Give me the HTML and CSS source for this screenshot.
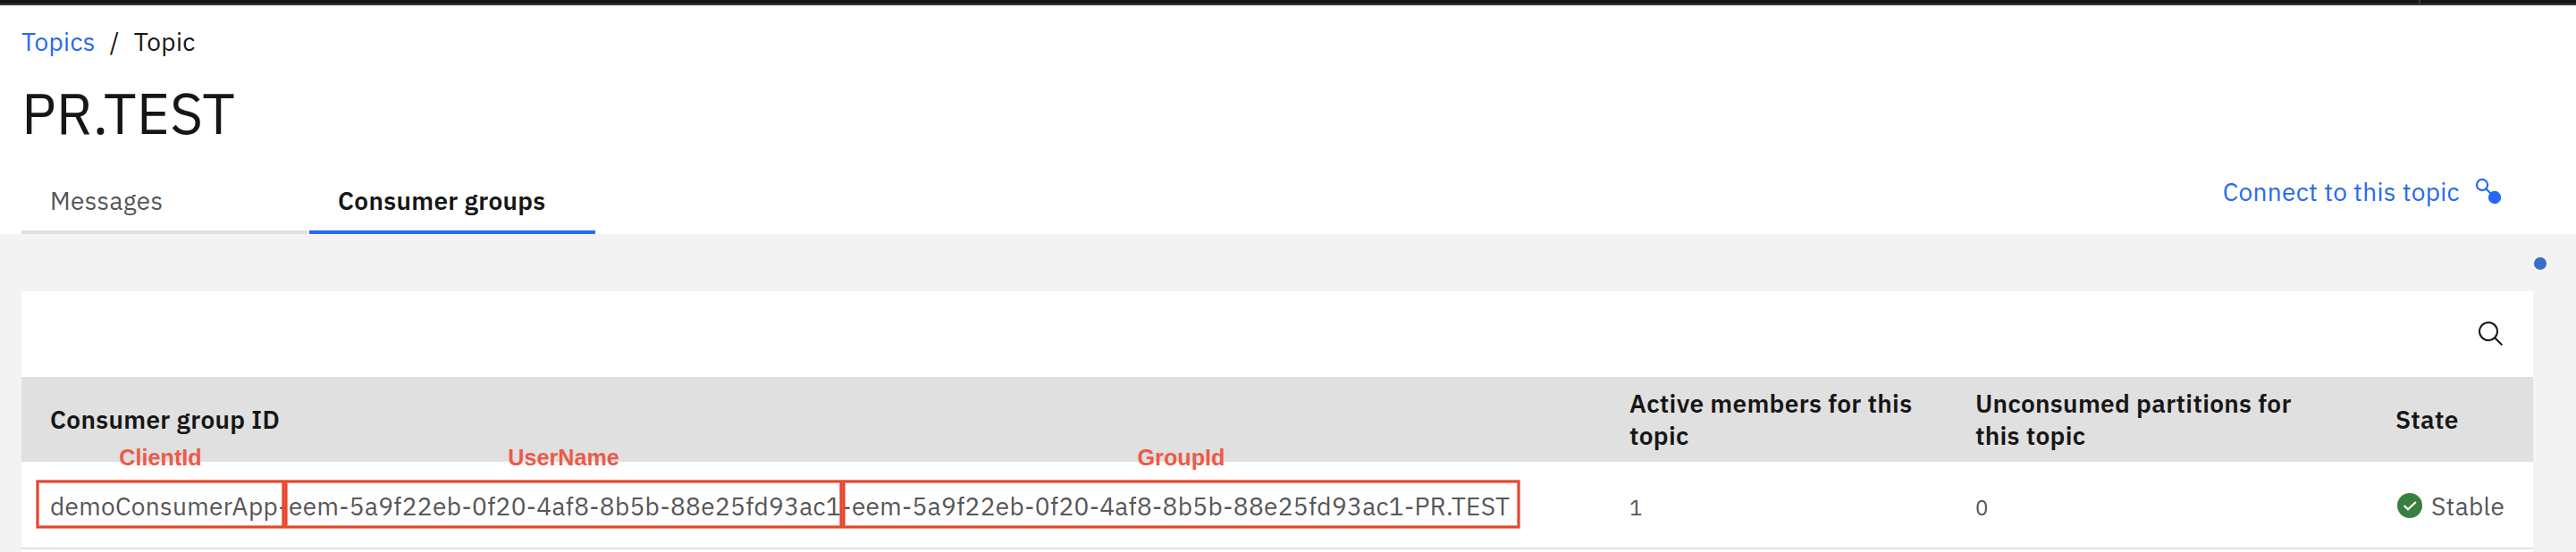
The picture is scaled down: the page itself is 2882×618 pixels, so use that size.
FILE: index.html
```html
<!DOCTYPE html>
<html lang="en">
<head>
<meta charset="utf-8">
<title>PR.TEST</title>
<link rel="stylesheet" href="styles.css">
</head>
<body>
<div class="shell-bar"><span class="shell-divider"></span></div>
<header class="page-header">
  <nav class="breadcrumb"><a class="crumb-link" href="#">Topics</a><span class="crumb-sep">/</span><span class="crumb-current">Topic</span></nav>
  <h1 class="title">PR.TEST</h1>
  <div class="tab-row">
    <div class="tabs">
      <div class="tab">Messages</div>
      <div class="tab tab-active">Consumer groups</div>
    </div>
    <a class="connect" href="#"><span>Connect to this topic</span>
      <svg class="connect-icon" viewBox="0 0 32 32"><circle cx="9" cy="9" r="6.1" fill="none" stroke="currentColor" stroke-width="2.2"/><path d="M13.2 13.2l6 6" stroke="currentColor" stroke-width="2.2"/><circle cx="23" cy="23" r="7.2" fill="currentColor"/></svg>
    </a>
  </div>
</header>
<main class="content">
  <span class="beacon"></span>
  <section class="panel">
    <div class="toolbar">
      <svg class="search-icon" viewBox="0 0 32 32"><path fill="currentColor" d="M29 27.586l-7.552-7.552a11.018 11.018 0 1 0-1.414 1.414L27.586 29zM4 13a9 9 0 1 1 9 9 9.01 9.01 0 0 1-9-9z"/></svg>
    </div>
    <div class="row head-row">
      <div>Consumer group ID</div>
      <div>Active members for this<br>topic</div>
      <div>Unconsumed partitions for<br>this topic</div>
      <div>State</div>
    </div>
    <div class="row body-row">
      <div>demoConsumerApp-eem-5a9f22eb-0f20-4af8-8b5b-88e25fd93ac1-eem-5a9f22eb-0f20-4af8-8b5b-88e25fd93ac1-PR.TEST</div>
      <div class="count">1</div>
      <div class="count">0</div>
      <div class="state"><svg class="check-icon" viewBox="0 0 28 28"><circle cx="14" cy="14" r="14" fill="#3b7f40"/><path d="M7.7 13.9l4.3 4.4 8.9-8.3" fill="none" stroke="#fff" stroke-width="2.2"/></svg><span>Stable</span></div>
    </div>
    <div class="note note-client"><span class="note-label">ClientId</span></div>
    <div class="note note-user"><span class="note-label">UserName</span></div>
    <div class="note note-group"><span class="note-label">GroupId</span></div>
  </section>
</main>
</body>
</html>
```
FILE: styles.css
```css
* { box-sizing: border-box; }
body { margin: 0; height: 618px; overflow: hidden; background: #fff; color: #161616; font: 28px/38px "IBM Plex Sans", Roboto, sans-serif; letter-spacing: 0.32px; display: flex; flex-direction: column; }
a { color: #2768f5; text-decoration: none; }
.shell-bar { height: 6px; flex: none; background: #161616; border-bottom: 2px solid #393939; display: flex; }
.shell-divider { width: 2px; margin-left: 2706px; background: #393939; }
.page-header { height: 256px; flex: none; padding: 23px 0 0 24px; display: flex; flex-direction: column; }
.breadcrumb { display: flex; height: 36px; line-height: 36px; }
.crumb-sep { margin: 0 16px; }
.title { margin: 21px 0 0; font-size: 64px; line-height: 80px; font-weight: 400; letter-spacing: 0; }
.tab-row { display: flex; justify-content: space-between; align-items: flex-end; margin-top: auto; }
.tabs { display: flex; gap: 2px; }
.tab { width: 320px; height: 72px; padding: 16px 32px 0; border-bottom: 4px solid #e0e0e0; color: #565656; }
.tab-active { color: #161616; font-weight: 600; border-color: #2768f5; }
.connect { display: flex; align-items: center; gap: 16px; height: 40px; margin: 0 82px 27px 0; }
.connect-icon { width: 32px; height: 32px; margin-bottom: 2px; }
.content { flex: 1; background: #f3f3f3; padding: 64px 48px 0 24px; position: relative; }
.beacon { position: absolute; left: 2835px; top: 26px; width: 14px; height: 14px; border-radius: 50%; background: #376ecc; }
.panel { background: #fff; height: 292px; }
.toolbar { height: 96px; display: flex; align-items: center; justify-content: flex-end; padding-right: 31px; }
.search-icon { width: 32px; height: 32px; }
.row { display: grid; grid-template-columns: 1767px 387px 470px 186px; align-items: center; }
.row > div { padding-left: 32px; white-space: nowrap; }
.head-row { height: 95px; background: #e0e0e0; font-weight: 600; line-height: 36px; }
.body-row { height: 98px; border-bottom: 2px solid #e0e0e0; color: #565656; padding-top: 4px; letter-spacing: 0.33px; }
.row > .count { font-size: 24px; padding-top: 2px; }
.row > .state { display: flex; align-items: center; gap: 10px; padding-left: 34px; }
.check-icon { width: 28px; height: 28px; margin-bottom: 2px; }
.note { position: absolute; top: 276px; height: 53px; border: 2px solid #e8442b; box-shadow: 0 0 0 1px rgba(232, 68, 43, 0.6), inset 0 0 0 1px rgba(232, 68, 43, 0.6); }
.note-label { position: absolute; top: -43px; left: 0; right: 0; text-align: center; color: #ed5a49; font: bold 25.2px/30px "Liberation Sans", sans-serif; letter-spacing: 0; }
.note-client { left: 41px; width: 277px; }
.note-user { left: 319px; width: 623px; }
.note-group { left: 943px; width: 757px; }
```
